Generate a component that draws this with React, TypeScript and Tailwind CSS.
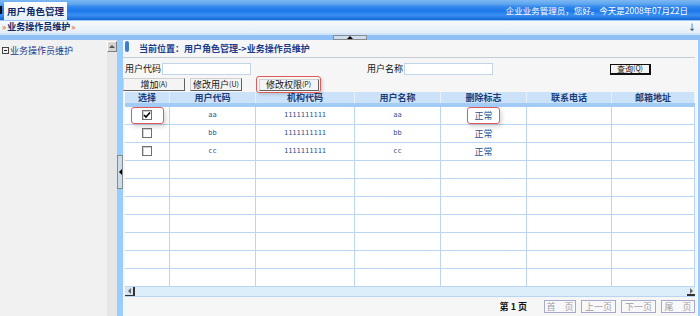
import React from "react";

const cols = [
  { key: "sel", label: "选择", w: "w-[45px]" },
  { key: "code", label: "用户代码", w: "w-[86px]" },
  { key: "org", label: "机构代码", w: "w-[99px]" },
  { key: "name", label: "用户名称", w: "w-[86px]" },
  { key: "del", label: "删除标志", w: "w-[86px]" },
  { key: "tel", label: "联系电话", w: "w-[85px]" },
  { key: "mail", label: "邮箱地址", w: "flex-1" },
];

const rows = [
  { code: "aa", org: "1111111111", name: "aa", del: "正常", checked: true },
  { code: "bb", org: "1111111111", name: "bb", del: "正常" },
  { code: "cc", org: "1111111111", name: "cc", del: "正常" },
];

function Check({ checked }: { checked?: boolean }) {
  return (
    <span className="inline-flex items-center justify-center w-[10px] h-[10px] border border-[#707070] bg-white shadow-[inset_1px_1px_0_#d0d0d0]">
      {checked && (
        <svg width="8" height="8" viewBox="0 0 8 8">
          <path d="M1 4 L3 6 L7 1.5" stroke="#000" strokeWidth="1.6" fill="none" />
        </svg>
      )}
    </span>
  );
}

function PageBtn({ label, w }: { label: string; w: string }) {
  return (
    <span className={`${w} h-[13px] flex items-center justify-center border border-[#a8a8cc] text-[#a0a0a0] text-[9px] leading-none bg-[#f8f8fb]`}>
      {label}
    </span>
  );
}

export default function App() {
  return (
    <div
      className="w-[700px] h-[316px] overflow-hidden flex flex-col bg-white text-[9px]"
      style={{ fontFamily: '"Noto Sans CJK SC", "Liberation Sans", sans-serif' }}
    >
      {/* top banner */}
      <div className="h-[20px] flex items-stretch bg-[linear-gradient(180deg,#7cb8f2_0%,#5ea6ee_20%,#2f86ec_35%,#1e78ea_55%,#3a90f2_75%,#1566d8_100%)]">
        <div className="w-[4px] flex items-center">
          <span className="w-[2px] h-[8px] bg-[#111]" />
        </div>
        <div className="mt-[2px] px-[3px] bg-[linear-gradient(180deg,#ffffff,#e6f0fb)] text-[#0f2a66] font-bold text-[9.5px] flex items-center">
          用户角色管理
        </div>
        <div className="flex-1" />
        <div className="pr-[12px] flex items-center text-white text-[8.5px]">
          企业业务管理员，您好。今天是2008年07月22日
        </div>
      </div>

      {/* sub bar */}
      <div className="h-[13px] flex items-center justify-between bg-[linear-gradient(180deg,#f7fafd,#e3edf8)] border-t border-[#9cc8f4]">
        <div className="pl-[2px] flex items-center font-bold text-[#0f2a66] text-[9px]">
          <span className="text-[#e07a3a] text-[8px] mr-[1px]">»</span>
          业务操作员维护
          <span className="text-[#e07a3a] text-[8px] ml-[1px]">»</span>
        </div>
        <span className="pr-[4px] text-[#111] text-[8px] leading-none">↓</span>
      </div>

      {/* collapse band */}
      <div className="h-[7px] flex flex-col">
        <div className="h-[2px] bg-[#cfe4f9]" />
        <div className="flex-1 bg-[#8ec0f5] flex justify-center">
          <span className="w-[34px] h-[5px] border border-[#8a8a8a] bg-[#c9dcf0] flex items-center justify-center">
            <span className="w-0 h-0 border-l-[3px] border-r-[3px] border-b-[3px] border-l-transparent border-r-transparent border-b-black" />
          </span>
        </div>
      </div>

      {/* body */}
      <div className="flex-1 flex min-h-0">
        {/* left tree */}
        <div className="w-[107px] bg-[#f1f1f1] pt-[4px] pl-[2px]">
          <div className="flex items-center text-[#1a3c8c] text-[9px]">
            <span className="w-[7px] h-[7px] border border-[#444] flex items-center justify-center mr-[1px]">
              <span className="w-[3px] h-[1px] bg-[#222]" />
            </span>
            业务操作员维护
          </div>
        </div>
        {/* scrollbar */}
        <div className="w-[10px] bg-[#e6e6e6] flex flex-col">
          <span className="h-[11px] mt-[1px] bg-[#d6d3ce] border border-t-white border-l-white border-r-[#808080] border-b-[#808080] flex items-center justify-center">
            <span className="w-0 h-0 border-l-[3px] border-r-[3px] border-b-[3px] border-l-transparent border-r-transparent border-b-[#555]" />
          </span>
        </div>
        {/* splitter */}
        <div className="w-[6px] bg-[#99ccff] flex items-center">
          <span className="w-[6px] h-[34px] border border-[#8a8a8a] bg-[#c8dcf0] flex items-center justify-center -mt-[12px]">
            <span className="w-0 h-0 border-t-[3px] border-b-[3px] border-r-[3px] border-t-transparent border-b-transparent border-r-black" />
          </span>
        </div>

        {/* main */}
        <div className="flex-1 bg-[#f6f6f6] flex flex-col pr-[3px] border-r-[2px] border-[#99ccff]">
          <div className="h-[18px] flex items-center border-b border-[#c4ccd4] pl-[2px]">
            <span className="w-[4px] h-[11px] rounded-[2px] bg-[#3b7fd2] -mt-[5px]" />
            <span className="ml-[10px] mt-[1px] font-bold text-[#1a3c8c] text-[9px]">
              当前位置：用户角色管理-&gt;业务操作员维护
            </span>
          </div>

          {/* search row */}
          <div className="h-[16px] mt-[3px] flex items-center text-[#111] text-[9px]">
            <span className="ml-[2px] w-[37px]">用户代码</span>
            <span className="w-[89px] h-[12px] bg-white border border-[#c0d4ea]" />
            <span className="ml-[116px] w-[37px]">用户名称</span>
            <span className="w-[89px] h-[12px] bg-white border border-[#c0d4ea]" />
            <span className="ml-[117px] w-[41px] h-[11px] border border-[#111] border-r-2 border-b-2 bg-[#f4f4f4] flex items-center justify-center text-[8px] leading-none">
              查询<span className="text-[7px]">(Q)</span>
            </span>
          </div>

          {/* button row */}
          <div className="h-[15px] flex items-center gap-[5px] text-[9px] text-[#111]">
            <span className="w-[62px] h-[13px] border border-[#d0d0d0] border-r-[#606060] border-b-[#606060] bg-[#f4f4f4] flex items-center justify-center leading-none">
              增加<span className="text-[7px]">(A)</span>
            </span>
            <span className="w-[52px] h-[13px] border border-[#d0d0d0] border-r-[#606060] border-b-[#606060] bg-[#f4f4f4] flex items-center justify-center leading-none">
              修改用户<span className="text-[7px]">(U)</span>
            </span>
            <span className="ml-[9px] relative w-[65px] h-[17px] rounded-[3px] border border-[#e05a5a] flex items-center justify-center shadow-[2px_2px_3px_rgba(0,0,0,0.12)]">
              <span className="w-[60px] h-[12px] border border-[#d0d0d0] border-r-[#606060] border-b-[#606060] bg-[#f4f4f4] flex items-center justify-center leading-none">
                修改权限<span className="text-[7px]">(P)</span>
              </span>
            </span>
          </div>

          {/* table */}
          <div className="flex-1 flex flex-col ml-[2px] min-h-0">
            <div className="h-[11px] flex bg-[#cce2f9]">
              {cols.map((c) => (
                <div
                  key={c.key}
                  className={`${c.w} border-r border-[#e6f1fc] flex items-center justify-center font-bold text-[#1a3c7a] text-[9px] leading-none`}
                >
                  {c.label}
                </div>
              ))}
            </div>
            <div className="h-[4px] bg-[#a2ccf6]" />
            <div className="flex-1 flex flex-col bg-white">
              {Array.from({ length: 10 }).map((_, i) => {
                const r = rows[i];
                return (
                  <div key={i} className="h-[18px] flex border-b border-[#bcd6f2]">
                    {cols.map((c) => (
                      <div
                        key={c.key}
                        className={`${c.w} border-r border-[#bcd6f2] flex items-center justify-center text-[#2c4f8c] leading-none`}
                        style={{ fontFamily: '"DejaVu Sans Mono", "Noto Sans CJK SC", monospace' }}
                      >
                        {r && c.key === "sel" && (
                          r.checked ? (
                            <span className="w-[33px] h-[17px] rounded-[3px] border border-[#e05a5a] flex items-center justify-center shadow-[2px_3px_4px_rgba(0,0,0,0.15)]">
                              <Check checked />
                            </span>
                          ) : (
                            <Check />
                          )
                        )}
                        {r && (c.key === "code" || c.key === "org" || c.key === "name") && (
                          <span className="text-[7px]">{r[c.key as "code" | "org" | "name"]}</span>
                        )}
                        {r && c.key === "del" && (
                          r.checked ? (
                            <span
                              className="w-[33px] h-[17px] rounded-[3px] border border-[#e05a5a] flex items-center justify-center text-[9px] shadow-[2px_3px_4px_rgba(0,0,0,0.15)]"
                              style={{ fontFamily: '"Noto Sans CJK SC", sans-serif' }}
                            >
                              {r.del}
                            </span>
                          ) : (
                            <span className="text-[9px]" style={{ fontFamily: '"Noto Sans CJK SC", sans-serif' }}>
                              {r.del}
                            </span>
                          )
                        )}
                      </div>
                    ))}
                  </div>
                );
              })}
            </div>
            {/* horizontal scrollbar */}
            <div className="h-[11px] flex items-stretch bg-[#ddeefb] border-b border-[#b8d4f0]">
              <span className="w-[10px] bg-[#d4e6f8] border-r-2 border-b border-r-[#333] border-b-[#333] flex items-center justify-center">
                <span className="w-0 h-0 border-t-[3px] border-b-[3px] border-r-[3px] border-t-transparent border-b-transparent border-r-[#666]" />
              </span>
              <span className="flex-1" />
              <span className="w-[8px] flex items-center justify-center border-b-2 border-[#333]">
                <span className="w-0 h-0 border-t-[3px] border-b-[3px] border-l-[3px] border-t-transparent border-b-transparent border-l-[#666]" />
              </span>
            </div>
            {/* pagination */}
            <div className="h-[19px] flex items-center justify-end gap-[5px]">
              <span className="mr-[12px] font-bold text-[#111] text-[9px]">第 1 页</span>
              <PageBtn label="首　页" w="w-[32px]" />
              <PageBtn label="上一页" w="w-[35px]" />
              <PageBtn label="下一页" w="w-[35px]" />
              <PageBtn label="尾　页" w="w-[34px]" />
            </div>
          </div>
        </div>
      </div>
    </div>
  );
}
